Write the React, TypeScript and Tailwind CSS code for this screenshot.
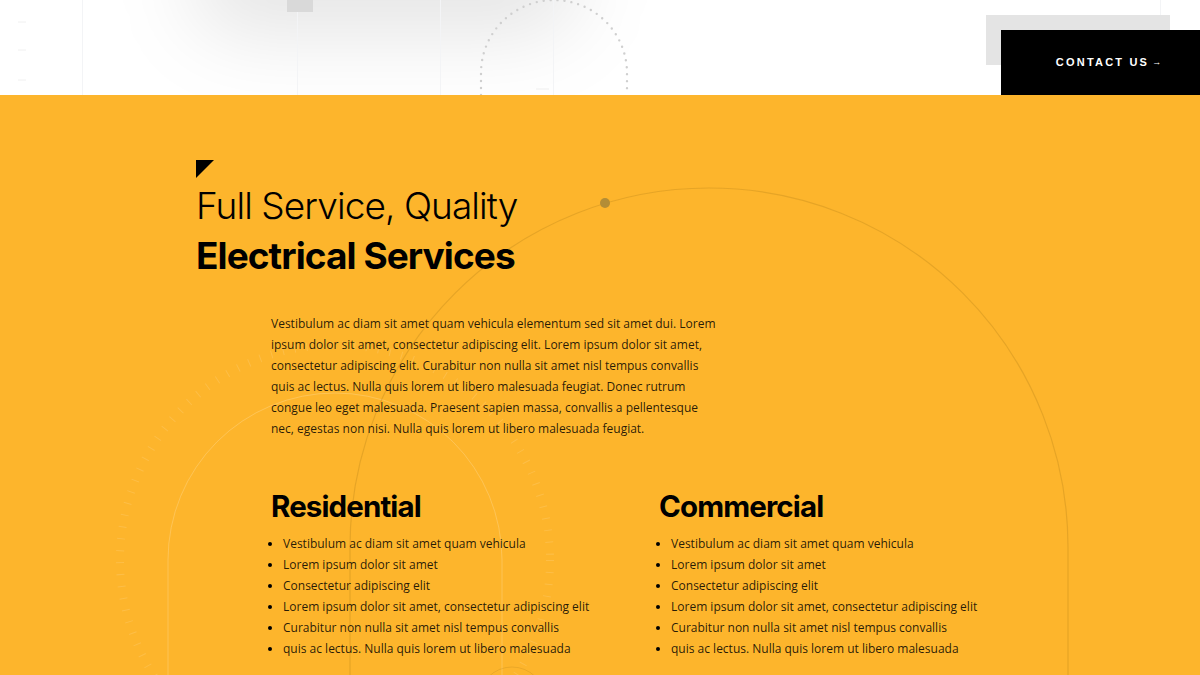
import React from 'react';

const residential = [
  'Vestibulum ac diam sit amet quam vehicula',
  'Lorem ipsum dolor sit amet',
  'Consectetur adipiscing elit',
  'Lorem ipsum dolor sit amet, consectetur adipiscing elit',
  'Curabitur non nulla sit amet nisl tempus convallis',
  'quis ac lectus. Nulla quis lorem ut libero malesuada',
];

const ServiceList: React.FC<{ title: string; items: string[] }> = ({ title, items }) => (
  <div>
    <h3 className="font-['Inter',sans-serif] text-[29.5px] font-bold leading-[36px] tracking-[-0.03em] text-black">
      {title}
    </h3>
    <ul className="mt-[9px] list-disc pl-[12px] font-['Open_Sans',sans-serif] text-[12px] leading-[21px] text-black/85 marker:text-black">
      {items.map((item) => (
        <li key={item}>{item}</li>
      ))}
    </ul>
  </div>
);

const HeaderDecor = () => (
  <>
    <div className="absolute -top-[75px] left-[190px] h-[110px] w-[390px] rounded-full bg-black/10 blur-2xl" />
    <div className="absolute left-[82px] top-0 h-full w-px bg-gray-100" />
    <div className="absolute left-[297px] top-0 h-full w-px bg-gray-100" />
    <div className="absolute left-[440px] top-0 h-full w-px bg-gray-100" />
    <div className="absolute left-[553px] top-0 h-full w-px bg-gray-100" />
    <div className="absolute left-[1160px] top-0 h-full w-px bg-gray-100" />
    <div className="absolute left-[287px] top-0 h-[12px] w-[26px] bg-[#d9d9d9]" />
    <svg className="absolute left-0 top-0" width="1200" height="95" viewBox="0 0 1200 95">
      <path
        d="M481 95 V73 A73 73 0 0 1 627 73 V95"
        fill="none"
        stroke="#cfcfcf"
        strokeWidth="2.4"
        strokeLinecap="round"
        strokeDasharray="0 7"
      />
      <line x1="536" y1="89" x2="549" y2="89" stroke="#eeeeee" />
      <g stroke="#f0f0f0" strokeWidth="1">
        <line x1="18" y1="22" x2="26" y2="22" />
        <line x1="18" y1="50" x2="26" y2="50" />
        <line x1="18" y1="80" x2="26" y2="80" />
      </g>
    </svg>
  </>
);

const SectionDecor = () => (
  <svg className="pointer-events-none absolute left-0 top-0" width="1200" height="580" viewBox="0 0 1200 580">
    <circle
      cx="335"
      cy="465"
      r="215"
      fill="none"
      stroke="#ffffff"
      strokeOpacity="0.13"
      strokeWidth="8"
      strokeDasharray="1 11"
    />
    <path d="M168 580 V465 A167 167 0 0 1 502 465 V580" fill="none" stroke="#ffffff" strokeOpacity="0.2" strokeWidth="1" />
    <path d="M350 580 V452 A359 359 0 0 1 1068 452 V580" fill="none" stroke="#8a6410" strokeOpacity="0.2" strokeWidth="1.2" />
    <circle cx="512" cy="605" r="33" fill="none" stroke="#8a6410" strokeOpacity="0.16" />
    <circle cx="605" cy="108" r="5" fill="#b38d36" />
  </svg>
);

export default function App() {
  return (
    <div className="h-[675px] w-[1200px] overflow-hidden bg-white">
      <header className="relative flex h-[95px] items-end justify-end">
        <HeaderDecor />
        <div className="relative">
          <div className="absolute -left-[15px] -top-[15px] h-[50px] w-[184px] bg-[#e4e4e4]" />
          <a
            href="#"
            className="relative flex h-[65px] w-[199px] items-center justify-center bg-black pl-[16px] font-['Liberation_Sans',sans-serif] text-[11px] font-bold tracking-[0.2em] text-white"
          >
            CONTACT US <span className="ml-[3px] text-[9px] tracking-normal">→</span>
          </a>
        </div>
      </header>

      <section className="relative h-[580px] bg-[#fdb52c]">
        <SectionDecor />
        <div className="relative pl-[196px] pt-[65px]">
          <div className="h-0 w-0 border-r-[18px] border-t-[18px] border-r-transparent border-t-black" />
          <h2 className="mt-[3px] font-['Inter',sans-serif] text-[37px] leading-[50px] tracking-[-0.025em] text-black">
            <span className="block font-light">Full Service, Quality</span>
            <span className="block font-bold">Electrical Services</span>
          </h2>

          <div className="pl-[75px]">
            <p className="mt-[32px] w-[452px] font-['Open_Sans',sans-serif] text-[12px] leading-[21px] text-black/85">
              Vestibulum ac diam sit amet quam vehicula elementum sed sit amet dui. Lorem ipsum dolor sit amet,
              consectetur adipiscing elit. Lorem ipsum dolor sit amet, consectetur adipiscing elit. Curabitur non nulla
              sit amet nisl tempus convallis quis ac lectus. Nulla quis lorem ut libero malesuada feugiat. Donec rutrum
              congue leo eget malesuada. Praesent sapien massa, convallis a pellentesque nec, egestas non nisi. Nulla
              quis lorem ut libero malesuada feugiat.
            </p>

            <div className="mt-[49px] grid grid-cols-[388px_1fr]">
              <ServiceList title="Residential" items={residential} />
              <ServiceList title="Commercial" items={residential} />
            </div>
          </div>
        </div>
      </section>
    </div>
  );
}
